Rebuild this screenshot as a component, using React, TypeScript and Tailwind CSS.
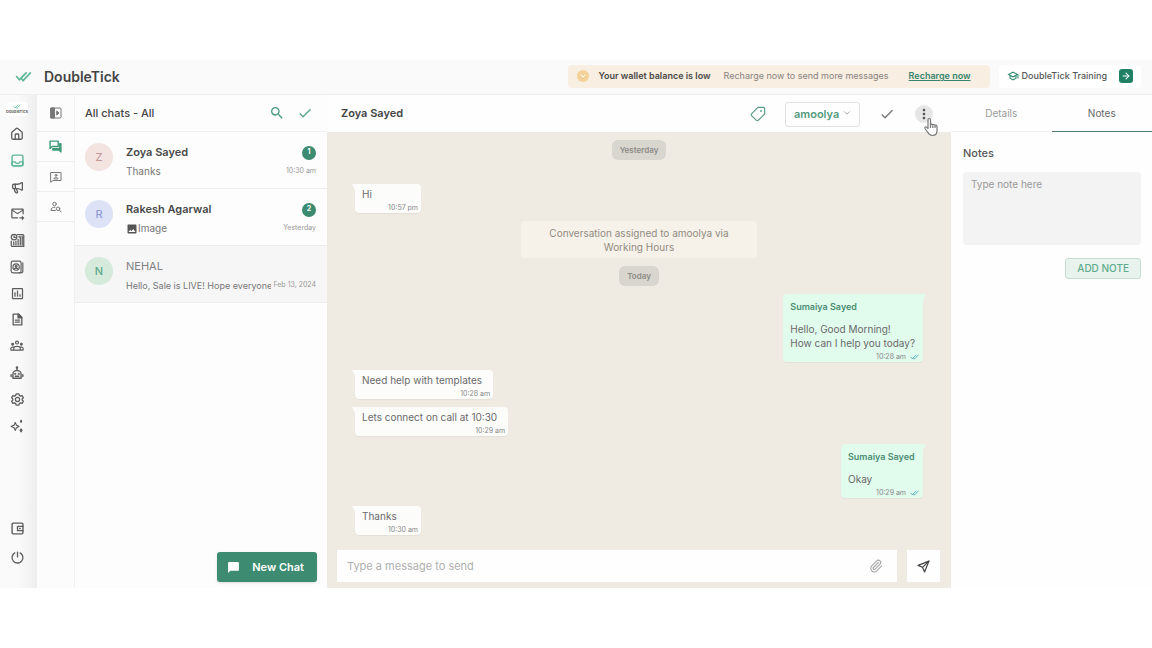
import type { ReactNode } from 'react';
import clsx from 'clsx';
import { Home, Megaphone, Tag, Paperclip, ArrowRight, ChevronDown } from 'lucide-react';
import {
  MdSearch,
  MdCheck,
  MdMoreVert,
  MdImage,
  MdChatBubble,
  MdOutlineForwardToInbox,
  MdOutlineInsertChart,
  MdOutlineSchool,
} from 'react-icons/md';

const Svg = ({ children, className = 'size-[14px]', width = 2 }: { children: ReactNode; className?: string; width?: number }) => (
  <svg viewBox="0 0 24 24" className={className} fill="none" stroke="currentColor" strokeWidth={width} strokeLinejoin="round" strokeLinecap="round" aria-hidden="true">
    {children}
  </svg>
);

const DoubleTick = ({ className }: { className?: string }) => (
  <svg viewBox="0 0 18 12" className={className} fill="none" stroke="currentColor" strokeWidth="1.8" aria-hidden="true">
    <path d="M1 5.5 4.5 9.5 12.5 1.5" />
    <path d="M6.5 8 8.5 10.5 17 1.5" />
  </svg>
);

const sideItems: { label: string; icon: ReactNode }[] = [
  { label: 'Home', icon: <Home className="size-[14px]" strokeWidth={2.2} /> },
  {
    label: 'Inbox',
    icon: (
      <Svg className="size-[13px] text-[#5cb697]" width={2.6}>
        <rect x="2" y="2" width="20" height="20" rx="3" />
        <path d="M2 14.500h5.500c1 4 8 4 9 0H22V20a2 2 0 0 1-2 2H4a2 2 0 0 1-2-2z" />
      </Svg>
    ),
  },
  { label: 'Broadcast', icon: <Megaphone className="size-[13px]" strokeWidth={2.4} /> },
  { label: 'Campaigns', icon: <MdOutlineForwardToInbox className="size-[15px]" /> },
  {
    label: 'Reports',
    icon: (
      <Svg className="size-[15px]">
        <path d="M12 2.500h8.500a1.500 1.500 0 0 1 1.500 1.500v17.500H3.500a1.500 1.500 0 0 1-1.500-1.500V13" />
        <circle cx="6.500" cy="6.500" r="4.500" />
        <path d="M6.500 4.500v2.500h2M6 14v5M9.500 13v6M13 10v9M16.500 7v12M19.500 5v14M14 6h3" />
      </Svg>
    ),
  },
  {
    label: 'Contacts',
    icon: (
      <Svg>
        <rect x="2" y="2" width="17" height="20" rx="3" />
        <path d="M22 5v15M16 22h3a3 3 0 0 0 3-2" />
        <circle cx="10.500" cy="12" r="5.500" />
        <circle cx="10.500" cy="11" r="1.500" />
        <path d="M7.500 15.500c1-2 5-2 6 0" />
      </Svg>
    ),
  },
  { label: 'Analytics', icon: <MdOutlineInsertChart className="size-[15px]" /> },
  {
    label: 'Templates',
    icon: (
      <Svg className="size-[13px]" width={2.4}>
        <path d="M4 2h10l6 6v14H4z" />
        <path d="M13 2v7h7z" fill="currentColor" />
        <path d="M8 13h8M8 17h8" />
      </Svg>
    ),
  },
  {
    label: 'Teams',
    icon: (
      <Svg>
        <circle cx="12" cy="6" r="2.500" />
        <circle cx="4.500" cy="9" r="1.500" fill="currentColor" />
        <circle cx="19.500" cy="9" r="1.500" fill="currentColor" />
        <path d="M6.500 19v-3.500c0-4 11-4 11 0V19z" />
        <path d="M6 19H1.500v-3c0-2 3-2.500 4.500-2M18 19h4.500v-3c0-2-3-2.500-4.500-2" />
      </Svg>
    ),
  },
  {
    label: 'Bots',
    icon: (
      <Svg width={2.4}>
        <path d="M5 21v-7a6 6 0 0 1 6-6h2a6 6 0 0 1 6 6v7z" />
        <path d="M12 7V3M2 15v3M22 15v3M9 17.500h6" />
        <circle cx="12" cy="2.500" r="1" />
        <circle cx="9" cy="13.500" r=".6" />
        <circle cx="15" cy="13.500" r=".6" />
      </Svg>
    ),
  },
  {
    label: 'Settings',
    icon: (
      <Svg className="size-[13px]" width={2.4}>
        <path d="M9.500 1.500h5l.8 3 2.200 1.200 3-.9 2.300 4.200-2.200 2v2l2.200 2-2.300 4.200-3-.9-2.200 1.200-.8 3h-5l-.8-3-2.200-1.200-3 .9-2.300-4.200 2.200-2v-2l-2.200-2 2.300-4.200 3 .9 2.200-1.200z" />
        <circle cx="12" cy="12" r="3.800" />
      </Svg>
    ),
  },
  {
    label: 'Assistant',
    icon: (
      <Svg>
        <path d="m9 6 2 4.500L15.500 13 11 15l-2 4.500L7 15l-5-2 5-2.500z" />
        <path d="m19 2 1 2-1 2-1-2zM19 17l1.500 2.500L19 22l-1.500-2.500z" fill="currentColor" />
      </Svg>
    ),
  },
];

const folderItems: { label: string; icon: ReactNode; className?: string }[] = [
  {
    label: 'All chats',
    className: 'text-[#3f9a78]',
    icon: (
      <Svg className="size-[13px]" width={2.6}>
        <path d="M2 2h15v10H6l-4 3.500z" />
        <path d="M20 7h2v15l-3.500-3.500H7V16h13z" fill="currentColor" />
      </Svg>
    ),
  },
  {
    label: 'Assigned chats',
    icon: (
      <Svg className="size-3">
        <path d="M2 3h20v16H6l-4 3z" />
        <circle cx="12" cy="8.500" r="1.800" />
        <path d="M8 15c.5-3.500 7.500-3.500 8 0z" />
      </Svg>
    ),
  },
  {
    label: 'Find contact',
    icon: (
      <Svg className="size-3">
        <circle cx="9" cy="6" r="3.500" />
        <path d="M11 19H2c0-5 3-6.500 8-6.500" />
        <circle cx="16" cy="15.500" r="3.500" />
        <path d="m19 18.500 3.500 3.500" />
      </Svg>
    ),
  },
];

const chats = [
  { name: 'Zoya Sayed', text: 'Thanks', time: '10:30 am', unread: 1, avatar: 'bg-[#f3e4e1] text-[#c09a96]' },
  { name: 'Rakesh Agarwal', text: 'Image', image: true, time: 'Yesterday', unread: 2, avatar: 'bg-[#dde2f6] text-[#909bd6]' },
  { name: 'NEHAL', text: 'Hello, Sale is LIVE! Hope everyone', time: 'Feb 13, 2024', unread: 0, avatar: 'bg-[#d5eadb] text-[#5fa889]' },
];

const ChatRow = ({ chat }: { chat: (typeof chats)[number] }) => (
  <button
    className={clsx(
      'flex h-[57px] w-full items-start gap-[13px] border-b border-[#ececec] pt-[11px] pr-[11px] pl-[10px] text-left',
      chat.unread ? 'bg-[#fdfdfd]' : 'bg-[#f6f6f6]'
    )}
  >
    <span className={clsx('flex size-7 shrink-0 items-center justify-center rounded-full text-[11px] font-medium', chat.avatar)}>
      {chat.name[0]}
    </span>
    <span className="min-w-0 flex-1">
      <span className="flex h-[19px] items-center justify-between">
        <span className={clsx('text-[11px]', chat.unread ? 'font-semibold text-[#4a4a4a]' : 'text-[#808080]')}>{chat.name}</span>
        {chat.unread > 0 && (
          <span className="flex size-[14px] items-center justify-center rounded-full bg-[#3c8b70] text-[7px] font-bold text-white">
            {chat.unread}
          </span>
        )}
      </span>
      <span className="flex h-[19px] items-center gap-[2px]">
        <span className={clsx('flex min-w-0 flex-1 items-center overflow-hidden whitespace-nowrap text-[#777]', chat.unread ? 'text-[10px]' : 'text-[9px]')}>
          {chat.image && <MdImage className="size-3 shrink-0 text-[#555]" />}
          {chat.text}
        </span>
        <span className="text-[7px] text-[#999]">{chat.time}</span>
      </span>
    </span>
  </button>
);

const Pill = ({ children }: { children: ReactNode }) => (
  <div className="flex h-5 shrink-0 items-center self-center rounded-md bg-[#d9d6d0] px-2 text-[8px] font-semibold text-[#8c8a86]">
    {children}
  </div>
);

type BubbleProps = { lines: string[]; time: string; sender?: string };

const Bubble = ({ lines, time, sender }: BubbleProps) => (
  <div
    className={clsx(
      'relative flex shrink-0 flex-col rounded-[4px] pl-[7px] text-[10px] leading-[14px] text-[#6a6a6a] shadow-[0_1px_1px_#0000000d]',
      sender ? 'mr-[10px] min-w-[82px] self-end rounded-tr-none bg-[#e1fbed] pt-[6px] pr-1' : 'min-w-[66px] self-start rounded-tl-none bg-[#fcfcfb] pt-[3px] pr-[3px]'
    )}
  >
    <svg
      viewBox="0 0 5 6"
      className={clsx('absolute top-0 h-[6px] w-[5px]', sender ? '-right-[3px] text-[#e1fbed]' : '-left-[3px] -scale-x-100 text-[#fcfcfb]')}
      aria-hidden="true"
    >
      <path d="M0 0h5L2 6H0z" fill="currentColor" />
    </svg>
    {sender && <p className="mb-2 pr-1 text-[9px] font-semibold text-[#4c8c72]">{sender}</p>}
    {lines.map((line) => (
      <p key={line} className={sender ? 'pr-1' : 'pr-2'}>
        {line}
      </p>
    ))}
    <p className="mt-[2px] flex items-center justify-end gap-1 text-[7px] leading-[10px] text-[#888]">
      {time}
      {sender && <DoubleTick className="h-[6px] w-[9px] text-[#53afc0]" />}
    </p>
  </div>
);

const Header = () => (
  <header className="flex h-[35px] shrink-0 items-center border-b border-[#eee] bg-[#fafafa] pr-[11px] pb-[2px] pl-[15px]">
    <DoubleTick className="h-[11px] w-[17px] text-[#5fb898]" />
    <h1 className="ml-3 text-[14px] font-semibold text-[#444]">DoubleTick</h1>
    <div className="ml-auto flex h-[23px] items-center rounded-[4px] bg-[#f8eee2] pr-[19px] pl-[9px] text-[9px]">
      <span className="flex size-3 items-center justify-center rounded-full bg-[#f2d298] text-white">
        <ChevronDown className="size-2" strokeWidth={3} />
      </span>
      <strong className="ml-[9px] font-semibold text-[#4a4846]">Your wallet balance is low</strong>
      <span className="ml-[13px] text-[#88837e]">Recharge now to send more messages</span>
      <a href="#recharge" className="ml-5 font-semibold text-[#36856a] underline">
        Recharge now
      </a>
    </div>
    <a href="#training" className="ml-[9px] flex h-[23px] items-center rounded-[4px] bg-white px-2 text-[9px] font-medium text-[#555]">
      <MdOutlineSchool className="size-3 text-[#278568]" />
      <span className="ml-[3px]">DoubleTick Training</span>
      <span className="ml-3 flex size-[14px] items-center justify-center rounded-[3px] bg-[#208064] text-white">
        <ArrowRight className="size-[10px]" strokeWidth={2.5} />
      </span>
    </a>
  </header>
);

const Sidebar = () => (
  <nav
    aria-label="Main"
    className="flex w-[37px] shrink-0 flex-col items-center bg-linear-to-r from-[#fafafa] from-50% to-[#eeeeee] pt-[7px] pr-[3px] pb-6 text-[#5c5c5c]"
  >
    <a href="#workspace" className="flex h-[14px] flex-col items-center justify-center rounded bg-white text-[4px] leading-[5px] font-bold text-[#666]">
      <DoubleTick className="h-[5px] w-2 text-[#4fb492]" />
      DoubleTick
    </a>
    <div className="mt-[11px] flex h-[306px] flex-col items-center justify-between">
      {sideItems.map(({ label, icon }) => (
        <a key={label} href={`#${label.toLowerCase()}`} aria-label={label} className="flex size-[14px] items-center justify-center">
          <span className="flex shrink-0">{icon}</span>
        </a>
      ))}
    </div>
    <a href="#wallet" aria-label="Wallet" className="mt-auto">
      <Svg className="size-[13px]" width={2.6}>
        <path d="M22 8V4a2 2 0 0 0-2-2H4a2 2 0 0 0-2 2v16a2 2 0 0 0 2 2h16a2 2 0 0 0 2-2v-4" />
        <path d="M12 8h10v8H12zM16 12h1" />
      </Svg>
    </a>
    <button aria-label="Log out" className="mt-4">
      <Svg className="size-[13px]" width={2.4}>
        <path d="M7 3.500a10 10 0 1 0 10 0M12 2v9" />
      </Svg>
    </button>
  </nav>
);

const ChatList = () => (
  <section className="flex w-[252px] shrink-0 flex-col bg-[#fdfdfd]">
    <div className="flex h-[37px] items-center border-b border-[#eee] pr-[14px] pl-[10px]">
      <h2 className="flex-1 text-[11px] font-medium text-[#444]">All chats - All</h2>
      <button aria-label="Search">
        <MdSearch className="size-4 text-[#4a9a7e]" />
      </button>
      <button aria-label="Mark all as read" className="ml-3">
        <MdCheck className="size-4 text-[#5fa68c]" />
      </button>
    </div>
    {chats.map((chat) => (
      <ChatRow key={chat.name} chat={chat} />
    ))}
    <button className="mt-auto mr-[10px] mb-[6px] flex h-[30px] items-center gap-3 self-end rounded-[3px] bg-[#3d8c71] pr-[13px] pl-[10px] text-[11px] font-semibold text-white shadow-sm">
      <MdChatBubble className="size-[13px]" />
      New Chat
    </button>
  </section>
);

const Conversation = () => (
  <main className="flex min-w-0 flex-1 flex-col">
    <div className="flex h-[37px] shrink-0 items-center bg-[#fefefe] pr-[18px] pl-[14px]">
      <h2 className="flex-1 text-[11px] font-semibold text-[#444]">Zoya Sayed</h2>
      <button aria-label="Add tag">
        <Tag className="size-4 rotate-90 text-[#559a80]" strokeWidth={1.7} />
      </button>
      <div className="relative ml-[19px]">
        <select
          aria-label="Assigned agent"
          className="h-[25px] w-[75px] appearance-none rounded-[3px] border border-[#e2e2e2] bg-[#fefefe] pl-2 text-[11px] font-semibold text-[#559a7f]"
        >
          <option>amoolya</option>
        </select>
        <ChevronDown className="pointer-events-none absolute top-2 right-2 size-[10px] text-[#999]" />
      </div>
      <button aria-label="Resolve" className="ml-[19px]">
        <MdCheck className="size-4 text-[#777]" />
      </button>
      <div className="relative ml-5">
        <button aria-label="More options" className="flex size-[18px] items-center justify-center rounded-full bg-[#e6e6e6]">
          <MdMoreVert className="size-4 text-[#555]" />
        </button>
        <svg viewBox="0 0 16 20" className="absolute top-3 left-2 h-5 w-4" fill="white" stroke="#777" strokeWidth="1.2" strokeLinejoin="round" aria-hidden="true">
          <path d="M5 11.500V3c0-2 2.500-2 2.500 0v5c.5-1.200 2-1 2.300 0 .6-.8 2-.6 2.200.5.700-.6 2-.2 2 1.200v3.800c0 3-1.500 5-4.500 5-2.500 0-3.700-1.200-5-3.500L2 11.500c-.8-1.500.8-2.300 1.800-1.200z" />
          <path d="M7.500 8v3M9.800 8.500V11M12 9v2" />
        </svg>
      </div>
    </div>
    <div className="flex min-h-0 flex-1 flex-col bg-[#efebe3]">
      <div className="flex min-h-0 flex-1 flex-col gap-2 overflow-hidden px-[18px] pt-2">
        <Pill>Yesterday</Pill>
        <div className="mt-4 flex flex-col pl-[10px]">
          <Bubble lines={['Hi']} time="10:57 pm" />
        </div>
        <p className="flex h-[37px] w-[236px] shrink-0 items-center self-center rounded-[4px] bg-[#f6f2ea] px-6 text-center text-[10px] leading-[14px] text-[#918b80]">
          Conversation assigned to amoolya via Working Hours
        </p>
        <Pill>Today</Pill>
        <Bubble sender="Sumaiya Sayed" lines={['Hello, Good Morning!', 'How can I help you today?']} time="10:28 am" />
        <div className="flex flex-col gap-2 pl-[10px]">
          <Bubble lines={['Need help with templates']} time="10:28 am" />
          <Bubble lines={['Lets connect on call at 10:30']} time="10:29 am" />
        </div>
        <Bubble sender="Sumaiya Sayed" lines={['Okay']} time="10:29 am" />
        <div className="flex flex-col pl-[10px]">
          <Bubble lines={['Thanks']} time="10:30 am" />
        </div>
      </div>
      <form className="flex shrink-0 gap-[10px] pr-[11px] pb-[6px] pl-[10px]" onSubmit={(e) => e.preventDefault()}>
        <div className="flex h-8 flex-1 items-center bg-[#fefefe] pr-[14px] pl-[10px]">
          <input
            type="text"
            aria-label="Message"
            placeholder="Type a message to send"
            className="min-w-0 flex-1 text-[11px] outline-none placeholder:text-[#b0b0b0]"
          />
          <button type="button" aria-label="Attach file">
            <Paperclip className="size-[14px] text-[#aaa]" />
          </button>
        </div>
        <button aria-label="Send" className="flex h-8 w-[33px] items-center justify-center bg-[#fefefe] text-[#444]">
          <Svg className="size-[13px]" width={2.2}>
            <path d="M22 2 2 10l8 3.500L14 22z" />
            <path d="M22 2 10 13.500" />
          </Svg>
        </button>
      </form>
    </div>
  </main>
);

const NotesPanel = () => (
  <aside className="flex w-[201px] shrink-0 flex-col bg-[#fefefe]">
    <div className="flex h-[37px] text-[10px]">
      <button className="flex-1 border-b border-[#f2f2f2] text-[#999]">Details</button>
      <button className="flex-1 border-b border-[#4f7a6a] text-[#666]">Notes</button>
    </div>
    <div className="flex flex-col pt-[13px] pr-[11px] pl-3">
      <label htmlFor="note" className="text-[11px] leading-4 font-medium text-[#555]">
        Notes
      </label>
      <textarea
        id="note"
        placeholder="Type note here"
        className="mt-[11px] h-[73px] resize-none rounded-[4px] bg-[#f3f3f3] px-2 py-[5px] text-[10px] leading-[15px] outline-none placeholder:text-[#999]"
      />
      <button className="mt-[13px] h-[21px] self-end rounded-[3px] border border-[#c3ddd1] bg-[#e9f3ee] px-[11px] text-[10px] font-medium text-[#5eac8c]">
        ADD NOTE
      </button>
    </div>
  </aside>
);

export default function App() {
  return (
    <div className="flex h-screen flex-col bg-white py-15 font-[Inter,sans-serif]">
      <Header />
      <div className="flex min-h-0 flex-1">
        <Sidebar />
        <nav aria-label="Chat folders" className="flex w-[38px] shrink-0 flex-col border-r border-[#f1f1f1] bg-[#fcfcfc] text-[#777]">
          <button aria-label="Expand panel" className="flex h-[37px] items-center justify-center border-b border-[#eee]">
            <Svg className="size-3">
              <rect x="2" y="2" width="20" height="20" rx="2" />
              <path d="M2 2h7v20H2z" fill="currentColor" />
              <path d="m14 8.500 4 3.500-4 3.500z" fill="currentColor" />
            </Svg>
          </button>
          {folderItems.map(({ label, icon, className }) => (
            <button key={label} aria-label={label} className={clsx('flex h-[30px] items-center justify-center border-b border-[#eee]', className)}>
              {icon}
            </button>
          ))}
        </nav>
        <ChatList />
        <Conversation />
        <NotesPanel />
      </div>
    </div>
  );
}
